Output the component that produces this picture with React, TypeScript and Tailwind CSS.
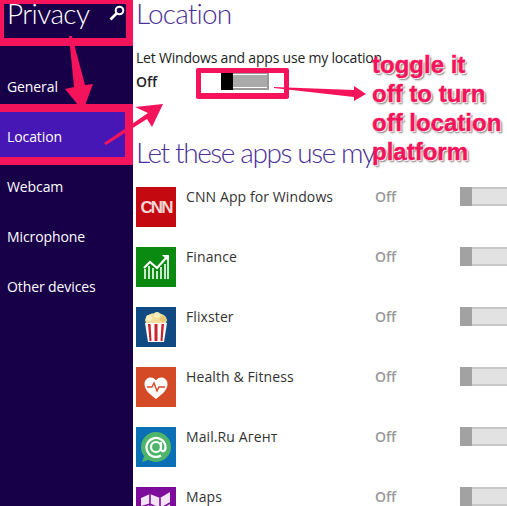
const navItems = ['General', 'Location', 'Webcam', 'Microphone', 'Other devices'];

function CnnIcon() {
  return (
    <div className="flex h-10 w-10 items-center justify-center bg-[#c40a10]">
      <span className="font-['Liberation_Sans',sans-serif] text-[17px] leading-none font-bold tracking-[-2px] text-[#f4d4d4]">CNN</span>
    </div>
  );
}

function FinanceIcon() {
  return (
    <div className="h-10 w-10 bg-[#0b8a12]">
      <svg viewBox="0 0 40 40" className="h-10 w-10">
        <g stroke="#dff2df" strokeWidth="1.8">
          <path d="M9 32V22M13 32V19M17 32V21M21 32V24M25 32V20M29 32V17M32 32V12" />
        </g>
        <path d="M8 21l6-6 7 6 9-10" fill="none" stroke="#fff" strokeWidth="2.2" />
        <path d="M26 8h7v7z" fill="#fff" />
      </svg>
    </div>
  );
}

function FlixsterIcon() {
  return (
    <div className="h-10 w-10 bg-[#114a82]">
      <svg viewBox="0 0 40 40" className="h-10 w-10">
        <ellipse cx="20" cy="13" rx="11" ry="7" fill="#f2dd9a" />
        <circle cx="13" cy="11" r="3" fill="#fbeebc" />
        <circle cx="21" cy="8" r="3" fill="#fbeebc" />
        <circle cx="27" cy="12" r="3" fill="#e6c873" />
        <path d="M9 16h22l-3 19H12z" fill="#fff" />
        <path d="M12 17h2.500l1 17H13.500zM18.500 17h3v17h-3zM25.500 17H28l-1.500 17h-2z" fill="#cf1f2a" />
      </svg>
    </div>
  );
}

function HealthIcon() {
  return (
    <div className="h-10 w-10 bg-[#d44a26]">
      <svg viewBox="0 0 40 40" className="h-10 w-10">
        <path d="M20 32C12 26 8.500 22 8.500 17c0-4 3-6.500 6-6.500 2.500 0 4.300 1.200 5.500 3 1.200-1.800 3-3 5.500-3 3 0 6 2.500 6 6.500 0 5-3.500 9-11.500 15z" fill="#fff" />
        <path d="M11 20h5l2-4 3 8 2-4h6" fill="none" stroke="#d44a26" strokeWidth="1.4" />
      </svg>
    </div>
  );
}

function MailRuIcon() {
  return (
    <div className="h-10 w-10 bg-[#0a6fb4]">
      <svg viewBox="0 0 40 40" className="h-10 w-10">
        <path d="M6 35l3-8 6 5z" fill="#4fb56a" />
        <circle cx="20" cy="20" r="15" fill="#4fb56a" />
        <circle cx="20" cy="20" r="5" fill="none" stroke="#fff" strokeWidth="2.2" />
        <path d="M25 15v7c0 3 4.500 3 4.500-1.500A9.500 9.500 0 1 0 25 28.500" fill="none" stroke="#fff" strokeWidth="2.2" />
      </svg>
    </div>
  );
}

function MapsIcon() {
  return (
    <div className="h-10 w-10 bg-[#7d0c9c]">
      <svg viewBox="0 0 40 40" className="h-10 w-10">
        <path d="M5 11l9-4 10 4 10-6v24l-10 6-10-4-9 4z" fill="#f3e3f7" />
        <path d="M14 7v24M24 11v24M5 20l9-3 10 5 10-6" fill="none" stroke="#7d0c9c" strokeWidth="1.6" />
      </svg>
    </div>
  );
}

const apps = [
  { name: 'CNN App for Windows', Icon: CnnIcon },
  { name: 'Finance', Icon: FinanceIcon },
  { name: 'Flixster', Icon: FlixsterIcon },
  { name: 'Health & Fitness', Icon: HealthIcon },
  { name: 'Mail.Ru Агент', Icon: MailRuIcon },
  { name: 'Maps', Icon: MapsIcon },
];

export default function App() {
  return (
    <div className="relative flex h-[506px] w-[507px] overflow-hidden bg-white font-['Open_Sans',sans-serif]">
      {/* Sidebar */}
      <aside className="h-full w-[133px] shrink-0 bg-[#180048] text-white">
        <div className="flex h-[61px] items-start justify-between pr-[8px] pl-[7px]">
          <h2 className="font-['Lato',sans-serif] text-[28px] leading-[26px] font-light tracking-[-0.6px]">Privacy</h2>
          <svg viewBox="0 0 16 16" className="mt-[5px] h-4 w-4" fill="none" stroke="#fff">
            <circle cx="10.500" cy="5.500" r="3.800" strokeWidth="2" />
            <path d="M7.500 8.500L1.500 14.500" strokeWidth="2.600" />
          </svg>
        </div>
        <nav>
          {navItems.map((item) => (
            <div
              key={item}
              className={`flex h-[50px] items-center pl-[7px] text-[14px] tracking-[-0.1px] ${item === 'Location' ? 'bg-[#4617b4]' : ''}`}
            >
              {item}
            </div>
          ))}
        </nav>
      </aside>

      {/* Main */}
      <main className="flex-1 pl-[3px]">
        <h1 className="font-['Lato',sans-serif] text-[28px] leading-[26px] font-light tracking-[-0.8px] text-[#4b2f96]">Location</h1>
        <p className="mt-[22px] text-[14px] leading-[20px] tracking-[-0.2px] whitespace-nowrap text-[#222]">Let Windows and apps use my location</p>
        <div className="mt-[3px] flex h-[20px] items-center">
          <span className="w-[85px] text-[14px] font-semibold text-[#222]">Off</span>
          <div className="flex h-[18px] w-[48px] border-y-2 border-r-2 border-[#9a9a9a]">
            <div className="-my-[2px] w-[12px] shrink-0 bg-black" />
            <div className="flex-1 border-y border-white bg-[#aaa]" />
          </div>
        </div>
        <h1 className="mt-[41px] font-['Lato',sans-serif] text-[28px] leading-[40px] font-light tracking-[-1.4px] whitespace-nowrap text-[#4b2f96]">Let these apps use my</h1>
        <div className="mt-[15px]">
          {apps.map(({ name, Icon }) => (
            <div key={name} className="flex h-[60px] items-start">
              <Icon />
              <span className="ml-[10px] w-[189px] text-[14px] leading-[20px] tracking-[0.1px] text-[#333]">{name}</span>
              <span className="w-[85px] text-[14px] leading-[20px] font-semibold text-[#999]">Off</span>
              <div className="flex h-[19px] flex-1 border-y-2 border-[#c8c8c8]">
                <div className="-my-[2px] w-[12px] shrink-0 bg-[#a2a2a2]" />
                <div className="flex-1 bg-[#e2e2e2]" />
              </div>
            </div>
          ))}
        </div>
      </main>

      {/* Annotations drawn over the screenshot */}
      <div className="absolute top-[-4px] left-0 h-[50px] w-[133px] border-t-[8px] border-r-[7px] border-b-[8px] border-l-[4px] border-[#f5135c]" />
      <div className="absolute top-[104px] left-0 h-[61px] w-[133px] border-y-[8px] border-r-[8px] border-[#f5135c]" />
      <div className="absolute top-[68px] left-[196px] h-[31px] w-[93px] rounded-[2px] border-[5px] border-b-[6px] border-[#f5135c]" />
      <svg className="absolute inset-0 h-[506px] w-[507px]" viewBox="0 0 507 506">
        <path d="M69 36l3 0 13 49 8-1-10 27-18-22 9-2z" fill="#f5135c" />
        <path d="M104 143l44-30-13-6 28-3-11 23-5-8-41 26z" fill="#f5135c" />
        <path d="M274 87l80 3v-4l12 8-12 7v-4l-80-9z" fill="#f5135c" />
      </svg>
      <div className="absolute top-[50px] left-[372px] font-['Liberation_Sans',sans-serif] text-[24px] leading-[29px] font-bold whitespace-nowrap text-[#f5135c] [-webkit-text-stroke:0.4px_#f5135c] [text-shadow:1px_1px_0_#fff,2px_2px_2px_#777]">
        <div>toggle it</div>
        <div>off to turn</div>
        <div>off location</div>
        <div>platform</div>
      </div>
    </div>
  );
}
